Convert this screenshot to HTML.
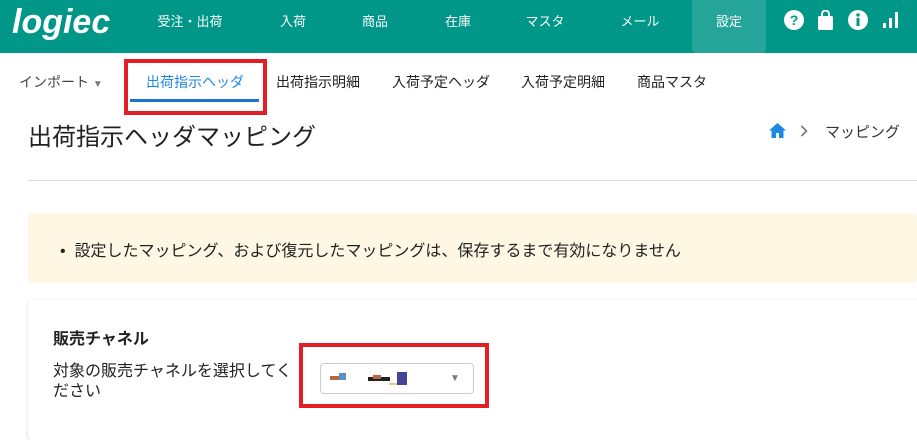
<!DOCTYPE html>
<html><head><meta charset="utf-8"><style>
*{margin:0;padding:0;box-sizing:border-box}
body{width:917px;height:424px;overflow:hidden;background:#fff;font-family:"Liberation Sans","Noto Sans CJK JP",sans-serif;color:#222;position:relative}
.hd{position:absolute;left:0;top:0;width:917px;height:53px;background:#009688}
.logo{position:absolute;left:12px;top:3px;font:italic bold 34px "Liberation Sans",sans-serif;color:#fff;letter-spacing:0px}
.nav{position:absolute;top:11px;color:#fff;font-size:13px;transform:translateX(-50%)}
.set{position:absolute;left:692px;top:0;width:74px;height:53px;background:#26a69a;border-radius:0 0 4px 4px}
.ab{position:absolute}
.sub{position:absolute;top:72px;font-size:14px;color:#222}
.red{position:absolute;border:4px solid #e41e26}
</style></head><body>
<div class="hd">
<div class="logo">logiec</div>
<div class="set"></div>
<div class="nav" style="left:190px">受注・出荷</div>
<div class="nav" style="left:293px">入荷</div>
<div class="nav" style="left:375px">商品</div>
<div class="nav" style="left:458px">在庫</div>
<div class="nav" style="left:545px">マスタ</div>
<div class="nav" style="left:640px">メール</div>
<div class="nav" style="left:729px">設定</div>
<svg class="ab" style="left:784px;top:10px" width="20" height="20" viewBox="0 0 20 20"><circle cx="10" cy="10" r="10" fill="#fff"/><text x="10" y="15" text-anchor="middle" font-size="14" font-weight="bold" fill="#009688" font-family="Liberation Sans">?</text></svg>
<svg class="ab" style="left:817px;top:10px" width="17" height="20" viewBox="0 0 17 20"><path d="M5 6V4a3.5 3.5 0 0 1 7 0v2" stroke="#fff" stroke-width="2" fill="none"/><rect x="1" y="6" width="15" height="14" rx="1.5" fill="#fff"/></svg>
<svg class="ab" style="left:848px;top:10px" width="20" height="20" viewBox="0 0 20 20"><circle cx="10" cy="10" r="10" fill="#fff"/><rect x="8.5" y="8" width="3" height="8" fill="#009688"/><circle cx="10" cy="5" r="1.7" fill="#009688"/></svg>
<svg class="ab" style="left:882px;top:12px" width="16" height="16"><rect x="1" y="11" width="3" height="5" fill="#fff"/><rect x="7" y="6" width="3" height="10" fill="#fff"/><rect x="13" y="0" width="3" height="16" fill="#fff"/></svg>
</div>
<div class="sub" style="left:19px;color:#444">インポート <span style="font-size:10px;color:#777">▼</span></div>
<div class="sub" style="left:146px;color:#1e88e5">出荷指示ヘッダ</div>
<div class="ab" style="left:130px;top:99px;width:129px;height:3px;background:#1976d2"></div>
<div class="red" style="left:124px;top:59px;width:143px;height:56px"></div>
<div class="sub" style="left:276px">出荷指示明細</div>
<div class="sub" style="left:392px">入荷予定ヘッダ</div>
<div class="sub" style="left:521px">入荷予定明細</div>
<div class="sub" style="left:637px">商品マスタ</div>
<div class="ab" style="left:28px;top:117px;font-size:24px;color:#222">出荷指示ヘッダマッピング</div>
<svg class="ab" style="left:769px;top:123px" width="17" height="15" viewBox="0 0 17 15"><path d="M8.5 0L0 7.5h2.5V15h4.5v-5h3v5h4.5V7.5H17z" fill="#1e88e5"/></svg>
<svg class="ab" style="left:800px;top:125px" width="8" height="12"><path d="M1.5 1l5 5-5 5" stroke="#777" stroke-width="1.6" fill="none"/></svg>
<div class="ab" style="left:825px;top:121px;font-size:15px;color:#333">マッピング</div>
<div class="ab" style="left:28px;top:180px;width:889px;height:1px;background:#ddd"></div>
<div class="ab" style="left:28px;top:213px;width:889px;height:70px;background:#fdf7e4;border-radius:4px"></div>
<div class="ab" style="left:60px;top:237px;font-size:16px;color:#222">•&nbsp;&nbsp;設定したマッピング、および復元したマッピングは、保存するまで有効になりません</div>
<div class="ab" style="left:28px;top:300px;width:900px;height:140px;background:#fff;border-radius:4px;box-shadow:0 1px 3px rgba(0,0,0,.18)"></div>
<div class="ab" style="left:53px;top:325px;font-size:16px;font-weight:bold">販売チャネル</div>
<div class="ab" style="left:53px;top:362px;font-size:16px;line-height:20px;width:245px">対象の販売チャネルを選択してください</div>
<div class="ab" style="left:320px;top:363px;width:154px;height:31px;border:1px solid #ccc;border-radius:4px"></div>
<div class="ab" style="left:330px;top:376px;width:10px;height:4px;background:#b5693a"></div>
<div class="ab" style="left:339px;top:373px;width:7px;height:7px;background:#5b8fd0"></div>
<div class="ab" style="left:368px;top:377px;width:22px;height:4px;background:#222"></div>
<div class="ab" style="left:373px;top:375px;width:8px;height:4px;background:#b5693a"></div>
<div class="ab" style="left:397px;top:372px;width:10px;height:13px;background:#44449a"></div>
<div class="ab" style="left:389px;top:383px;width:8px;height:2px;background:#f5c67a"></div>
<div class="ab" style="left:450px;top:373px;font-size:10px;color:#777">▼</div>
<div class="red" style="left:299px;top:343px;width:190px;height:65px"></div>
</body></html>
